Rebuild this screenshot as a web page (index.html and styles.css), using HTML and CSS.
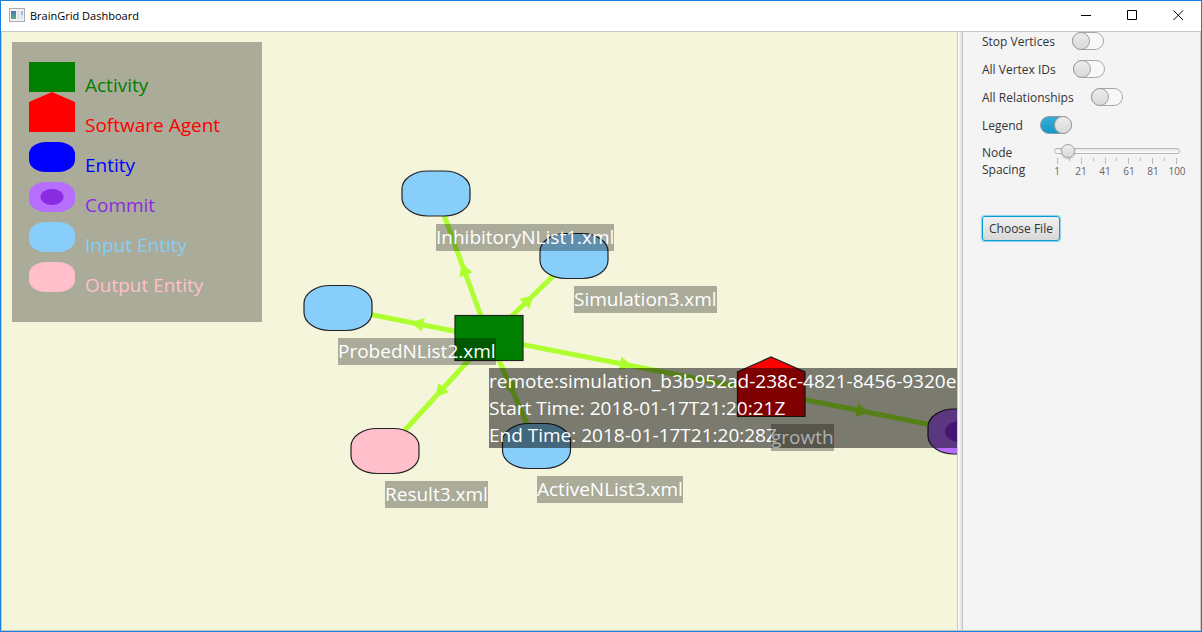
FILE: index.html
```html
<!DOCTYPE html>
<html lang="en">
<head>
<meta charset="utf-8">
<title>BrainGrid Dashboard</title>
<link rel="stylesheet" href="styles.css">
</head>
<body>
<div class="window">
  <header class="titlebar">
    <svg class="app-icon" width="16" height="14" viewBox="0 0 16 14" aria-hidden="true">
      <defs>
        <linearGradient id="pane" x1="0" y1="0" x2="0" y2="1">
          <stop offset="0" stop-color="#4a78a8"/><stop offset="1" stop-color="#5fae84"/>
        </linearGradient>
      </defs>
      <rect x="0.5" y="0.5" width="15" height="13" fill="#f2f2f4" stroke="#a9abb0"/>
      <rect x="2" y="3" width="5" height="8" fill="url(#pane)"/>
      <rect x="8" y="3" width="3" height="8" fill="#dfe3e8"/>
      <rect x="12" y="3" width="2" height="4" fill="#9fb8dc"/>
      <rect x="12" y="7" width="2" height="4" fill="#e3e6ea"/>
    </svg>
    <h1 class="title">BrainGrid Dashboard</h1>
    <div class="window-buttons">
      <button class="window-button" aria-label="Minimize"><svg width="11" height="11" viewBox="0 0 11 11"><path d="M0 5.5H10"/></svg></button>
      <button class="window-button" aria-label="Maximize"><svg width="11" height="11" viewBox="0 0 11 11"><path d="M0.5 0.5H9.5V9.5H0.5Z"/></svg></button>
      <button class="window-button" aria-label="Close"><svg width="11" height="11" viewBox="0 0 11 11"><path d="M0.5 0.5L10 10M10 0.5L0.5 10"/></svg></button>
    </div>
  </header>

  <main class="content">
    <section class="canvas" aria-label="Provenance graph">
      <svg class="graph" aria-hidden="true">
        <defs>
          <marker id="arrow" markerUnits="userSpaceOnUse" markerWidth="16" markerHeight="16" viewBox="-12 -8 16 16" refX="0" refY="0" orient="auto">
            <path d="M3 0L-10 -7V7Z" fill="#adff2f"/>
          </marker>
        </defs>
        <g class="edges">
          <path d="M487 306l-26.5 -72.5l-26.5 -72.5"/>
          <path d="M487 306l42.5 -41l42.5 -41"/>
          <path d="M487 306l-75.5 -15l-75.5 -15"/>
          <path d="M487 306l-52 57l-52 57"/>
          <path d="M487 306l24 54l24 54"/>
          <path d="M487 306l141 27.5l141 27.5"/>
          <path d="M769 361l95.5 19l95.5 19"/>
        </g>
        <g class="nodes">
          <rect x="400" y="139" width="68" height="45" rx="26" ry="18" fill="#87cefa"/>
          <rect x="538" y="201.5" width="68" height="45" rx="26" ry="18" fill="#87cefa"/>
          <rect x="302" y="253.5" width="68" height="45" rx="26" ry="18" fill="#87cefa"/>
          <rect x="349" y="396.5" width="68" height="45" rx="26" ry="18" fill="#ffc0cb"/>
          <rect x="500.5" y="391.5" width="68" height="45" rx="26" ry="18" fill="#87cefa"/>
          <rect x="453" y="283.5" width="68" height="45" fill="#008000"/>
          <path d="M735.5 384.5V340L769 325L803 340V384.5Z" fill="#ff0000"/>
          <rect x="926" y="377" width="68" height="45" rx="26" ry="18" fill="#b76eff"/>
          <ellipse class="core" cx="960" cy="399.5" rx="17" ry="11" fill="#8a2be2"/>
        </g>
      </svg>

      <span class="node-label inhibitory">InhibitoryNList1.xml</span>
      <span class="node-label simulation">Simulation3.xml</span>
      <span class="node-label probed">ProbedNList2.xml</span>
      <span class="node-label result">Result3.xml</span>
      <span class="node-label active">ActiveNList3.xml</span>

      <div class="tooltip">
        <p>remote:simulation_b3b952ad-238c-4821-8456-9320e</p>
        <p>Start Time: 2018-01-17T21:20:21Z</p>
        <p>End Time: 2018-01-17T21:20:28Z</p>
      </div>

      <span class="node-label growth">growth</span>

      <ul class="legend">
        <li class="legend-row activity"><svg class="swatch" width="46" height="30"><rect width="46" height="30"/></svg><span>Activity</span></li>
        <li class="legend-row agent"><svg class="swatch" width="46" height="30"><path d="M0 30V0L23 -10L46 0V30Z"/></svg><span>Software Agent</span></li>
        <li class="legend-row entity"><svg class="swatch" width="46" height="30"><rect width="46" height="30" rx="17" ry="12"/></svg><span>Entity</span></li>
        <li class="legend-row commit"><svg class="swatch" width="46" height="30"><rect class="shell" width="46" height="30" rx="17" ry="12"/><ellipse cx="23" cy="15" rx="11.5" ry="8"/></svg><span>Commit</span></li>
        <li class="legend-row input"><svg class="swatch" width="46" height="30"><rect width="46" height="30" rx="17" ry="12"/></svg><span>Input Entity</span></li>
        <li class="legend-row output"><svg class="swatch" width="46" height="30"><rect width="46" height="30" rx="17" ry="12"/></svg><span>Output Entity</span></li>
      </ul>
    </section>

    <div class="divider"></div>

    <aside class="panel">
      <div class="row"><label for="stop">Stop Vertices</label><input class="toggle" type="checkbox" id="stop"></div>
      <div class="row"><label for="ids">All Vertex IDs</label><input class="toggle" type="checkbox" id="ids"></div>
      <div class="row"><label for="relations">All Relationships</label><input class="toggle" type="checkbox" id="relations"></div>
      <div class="row"><label for="legend">Legend</label><input class="toggle" type="checkbox" id="legend" checked></div>
      <div class="row spacing-row">
        <label class="spacing-label" for="spacing">Node Spacing</label>
        <div class="slider">
          <input class="range" type="range" id="spacing" min="1" max="100" value="10">
          <div class="ticks"><i></i><i></i><i></i><i></i><i></i><i></i><i></i><i></i><i></i><i></i><i></i></div>
          <div class="scale"><span>1</span><span>21</span><span>41</span><span>61</span><span>81</span><span>100</span></div>
        </div>
      </div>
      <button class="choose">Choose File</button>
    </aside>
  </main>
</div>
</body>
</html>
```

FILE: styles.css
```css
*, *::before { box-sizing: border-box; }

html, body { height: 100%; }

body {
  margin: 0;
  font-family: "Open Sans", "Noto Sans", sans-serif;
  font-size: 12px;
  color: #333;
}

.window {
  display: flex;
  flex-direction: column;
  height: 100%;
  border: 1px solid #1a80d9;
  background: #fff;
}

/* Title bar */
.titlebar {
  display: flex;
  align-items: center;
  height: 30px;
  padding: 0 0 2px 8px;
  gap: 5px;
}

.title {
  margin: 0;
  font-size: 11px;
  font-weight: 400;
  color: #000;
}

.window-buttons { display: flex; margin-left: auto; }

.window-button {
  display: flex;
  align-items: center;
  justify-content: center;
  width: 46px;
  height: 28px;
  padding: 0;
  border: 0;
  background: none;
}

.window-button path { fill: none; stroke: #000; }

/* Content area */
.content {
  display: flex;
  flex: 1;
  min-height: 0;
  border: 1px solid #c8c8c8;
}

.canvas {
  position: relative;
  flex: 1;
  min-width: 0;
  overflow: hidden;
  padding: 10px;
  background: #f5f5dc;
}

.graph {
  position: absolute;
  inset: 0;
  width: 100%;
  height: 100%;
}

.edges path {
  fill: none;
  stroke: #adff2f;
  stroke-width: 5;
  marker-mid: url(#arrow);
}

.nodes > * { stroke: #222; stroke-width: 1.2; }
.nodes .core { stroke: none; }

.node-label {
  position: absolute;
  height: 27px;
  font-size: 19px;
  line-height: 27px;
  white-space: nowrap;
  color: #fff;
  background: rgba(0, 0, 0, 0.3);
}

.inhibitory { left: 434px; top: 192px; }
.simulation { left: 572px; top: 254px; }
.probed { left: 336px; top: 306px; }
.result { left: 383px; top: 449px; }
.active { left: 535px; top: 444px; }
.growth { left: 769px; top: 392px; color: #b0b0b0; }

.tooltip {
  position: absolute;
  left: 487px;
  top: 336px;
  height: 80px;
  width: 800px;
  font-size: 19px;
  line-height: 27px;
  white-space: nowrap;
  color: #fff;
  background: rgba(0, 0, 0, 0.5);
}

.tooltip p { margin: 0; }

/* Legend */
.legend {
  position: relative;
  display: flex;
  flex-direction: column;
  gap: 10px;
  width: 250px;
  height: 280px;
  margin: 0;
  padding: 20px 17px;
  list-style: none;
  background: rgba(0, 0, 0, 0.3);
}

.legend-row {
  display: flex;
  gap: 10px;
  height: 30px;
  font-size: 19px;
  line-height: 26px;
}

.legend-row span { padding-top: 10px; }
.swatch { flex: none; overflow: visible; fill: currentColor; }

.activity { color: #008000; }
.agent { color: #ff0000; }
.entity { color: #0000ff; }
.commit { color: #8a2be2; }
.commit .shell { fill: #b76eff; }
.input { color: #87cefa; }
.output { color: #ffc0cb; }

/* Side panel */
.divider {
  width: 6px;
  border: solid #c8c8c8;
  border-width: 0 1px;
  background: linear-gradient(to right, #fff, #dcdcdc);
}

.panel {
  display: flex;
  flex-direction: column;
  align-items: flex-start;
  gap: 10px;
  width: 237px;
  padding: 0 16px 0 19px;
  background: #f4f4f4;
}

.row {
  display: flex;
  align-items: center;
  gap: 17px;
  height: 18px;
  white-space: nowrap;
}

.toggle {
  appearance: none;
  width: 32px;
  height: 18px;
  margin: 0;
  border: 1px solid #a8a8a8;
  border-radius: 9px;
  background: #f8f8f8;
}

.toggle::before {
  content: "";
  display: block;
  width: 18px;
  height: 18px;
  margin: -1px;
  border: 1px solid #a0a0a0;
  border-radius: 50%;
  background: linear-gradient(#ececec, #d9d9d9);
}

.toggle:checked { border-color: #8c9ba1; background: linear-gradient(#36add6, #1498c8); }
.toggle:checked::before { margin-left: 13px; }

.spacing-row {
  align-items: flex-start;
  height: 34px;
}

.spacing-label {
  width: 51px;
  line-height: 17px;
  white-space: normal;
}

.slider { position: relative; width: 134px; }

.slider::before {
  content: "";
  position: absolute;
  left: 4px;
  right: 4px;
  top: 4px;
  height: 6px;
  border: 1px solid #b8b8b8;
  border-radius: 3px;
  background: linear-gradient(#e4e4e4, #fff);
}

.range {
  appearance: none;
  position: relative;
  display: block;
  width: 100%;
  height: 14px;
  margin: 0;
  background: none;
}

.range::-webkit-slider-thumb {
  appearance: none;
  box-sizing: border-box;
  width: 14px;
  height: 14px;
  border: 1px solid #a0a0a0;
  border-radius: 50%;
  background: linear-gradient(#efefef, #dadada);
  box-shadow: 0 1px 2px rgba(0, 0, 0, 0.2);
}

.ticks {
  display: flex;
  justify-content: space-between;
  height: 7px;
  padding: 0 7px;
}

.ticks i { width: 1px; height: 3px; background: #bbb; }
.ticks i:nth-child(odd) { height: 6px; }

.scale {
  display: flex;
  justify-content: space-between;
  margin: 0 -5px;
  font-size: 10px;
  line-height: 12px;
  color: #666;
}

.scale span { width: 24px; text-align: center; }

.choose {
  height: 25px;
  margin-top: 28px;
  padding: 0 6px;
  border: 1px solid #039ed3;
  border-radius: 3px;
  box-shadow: 0 0 1px 1px #8fd0ea;
  font: inherit;
  color: #333;
  background: linear-gradient(#f0f0f0, #d8d8d8);
}
```
